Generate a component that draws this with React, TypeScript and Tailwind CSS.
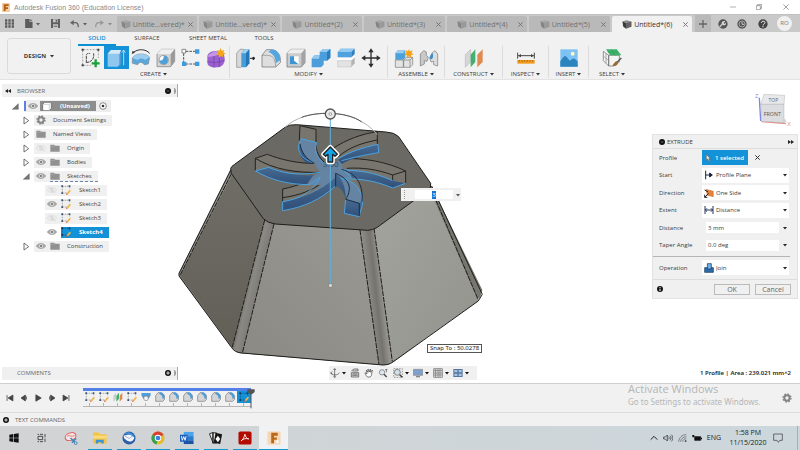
import React from 'react';
import clsx from 'clsx';

type IconProps = { className?: string };

/* ---------- small shared icons ---------- */

const Caret: React.FC<IconProps> = ({ className = 'w-1 h-1 fill-[#333]' }) => (
  <svg viewBox="0 0 8 8" className={className} aria-hidden="true">
    <path d="M0 2h8L4 7z" />
  </svg>
);

const CubeIcon: React.FC<{ active?: boolean }> = ({ active }) => (
  <svg viewBox="0 0 30 28" className="w-[10px] h-[9px] shrink-0" aria-hidden="true">
    <path d="M1 4 14 1l15 4-13 5z" fill={active ? '#8c8c8c' : '#a5a5a5'} />
    <path d="M1 4 12 9v18L3 20z" fill={active ? '#3a3a3a' : '#858585'} />
    <path d="M12 9 29 5v16l-17 6z" fill={active ? '#636363' : '#999'} />
  </svg>
);

const EyeIcon: React.FC<{ off?: boolean }> = ({ off }) => (
  <svg viewBox="0 0 30 24" className="w-[10px] h-2 shrink-0" aria-hidden="true">
    <path d="M1 12C7 2 23 2 29 12 23 22 7 22 1 12z" fill={off ? 'none' : '#a8a8a8'} stroke={off ? '#d6d6d6' : '#989898'} strokeWidth="2" />
    <circle cx="15" cy="12" r="5" fill={off ? '#e4e4e4' : '#858585'} stroke={off ? '#d6d6d6' : '#f2f2f2'} strokeWidth="2" />
    {off && <path d="M4 2 26 22" stroke="#d2d2d2" strokeWidth="2" />}
  </svg>
);

const FolderIcon = () => (
  <svg viewBox="0 0 30 24" className="w-[10px] h-2 shrink-0" aria-hidden="true">
    <path d="M1 2h11l3 3h14v18H1z" fill="#919191" />
    <path d="M1 7h13l3-3" stroke="#b5b5b5" strokeWidth="1.5" fill="none" />
  </svg>
);

const GearIcon: React.FC<IconProps> = ({ className = 'w-[10px] h-[10px] shrink-0' }) => (
  <svg viewBox="0 0 30 30" className={className} aria-hidden="true">
    <circle cx="15" cy="15" r="8" fill="none" stroke="#858585" strokeWidth="6" />
    <circle cx="15" cy="15" r="12" fill="none" stroke="#858585" strokeWidth="4" strokeDasharray="5 4.42" />
  </svg>
);

const SketchIcon: React.FC<{ dark?: boolean }> = ({ dark }) => (
  <svg viewBox="0 0 30 30" className="w-[10px] h-[10px] shrink-0" aria-hidden="true">
    <path d="M4 4h22M4 4v20h14M26 4v8" fill="none" stroke={dark ? '#17496b' : '#8b8b8b'} strokeWidth="2" strokeDasharray="5 2" />
    <g fill={dark ? '#123d66' : '#3c5574'}>
      <path d="M1 1h5v5H1zM23 1h5v5h-5zM1 22h5v5H1z" />
    </g>
    <path d="m17 25 9-11 4 3-9 11z" fill="#f3b63d" />
    <path d="m17 25 4 3-6 2z" fill="#e0532e" />
  </svg>
);

const InfoDot: React.FC<{ sign: 'plus' | 'minus' | 'info' }> = ({ sign }) => (
  <svg viewBox="0 0 18 18" className="w-[6px] h-[6px] shrink-0" aria-hidden="true">
    <circle cx="9" cy="9" r="9" fill="#111" />
    {sign === 'plus' && <path d="M9 4v10M4 9h10" stroke="#fff" strokeWidth="2.5" />}
    {sign === 'minus' && <path d="M5 9h8" stroke="#999" strokeWidth="2" />}
    {sign === 'info' && <path d="M9 3v3M9 8v7" stroke="#fff" strokeWidth="3" />}
  </svg>
);

/* ---------- ribbon icons, all on a 60 unit grid ---------- */

const Art: React.FC<{ children: React.ReactNode }> = ({ children }) => (
  <svg viewBox="0 0 60 60" className="w-5 h-5" aria-hidden="true">
    {children}
  </svg>
);

const CreateSketch = (
  <Art>
    <path d="M8 5h42M5 8v40M8 52h22M52 8v22" stroke="#777" strokeWidth="2" strokeDasharray="5 4" />
    <path d="M2 2h6v6H2zM49 2h6v6h-6zM2 49h6v6H2z" fill="#333" />
    <path d="M16 44V22c0-6 10-8 12-4M16 44c16-2 24-12 22-28" fill="none" stroke="#444" strokeWidth="3" strokeDasharray="9 2" />
    <path d="M44 34v24M32 46h24" stroke="#18a03c" strokeWidth="7" />
  </Art>
);
const Extrude = (
  <Art>
    <path d="M5 17 15 6h30l-4 12v32l-6 6H5z" fill="#8fc7ee" />
    <path d="M5 17 15 6h30l-4 11z" fill="#d3e9f8" />
    <path d="M41 18 46 7v40l-5 8z" fill="#4a98d2" />
    <path d="M53 52V10M48 14l5-8 5 8" stroke="#fff" strokeWidth="2" fill="none" />
  </Art>
);
const Revolve = (
  <Art>
    <path d="M4 30C14 14 44 14 56 28L52 48 40 50C32 40 24 42 20 50L4 46z" fill="#5ba7dc" stroke="#7c8b96" strokeWidth="2" />
    <path d="M4 30C14 14 44 14 56 28L42 36C32 28 24 32 20 36z" fill="#9bcdf0" />
    <path d="M6 14C20 2 44 2 56 16" stroke="#333" strokeWidth="3" fill="none" />
    <path d="m2 18 3-10 7 6z" fill="#333" />
  </Art>
);
const Hole = (
  <Art>
    <path d="M3 18 16 4h40v36L44 56H3z" fill="#d4d4d4" stroke="#777" strokeWidth="2" />
    <path d="M3 18 16 4h40L44 18z" fill="#f0f0f0" />
    <path d="M44 18 56 4v36L44 56z" fill="#9a9a9a" />
    <circle cx="23" cy="36" r="14" fill="#fff" stroke="#777" strokeWidth="2" />
    <path d="M23 23a13 13 0 1 1-13 14c10 2 14-6 13-14z" fill="#4f9fd8" />
  </Art>
);
const Pattern = (
  <Art>
    <path d="M14 10h30M14 48h30M8 16v26" stroke="#555" strokeWidth="3" strokeDasharray="8 3" />
    <path d="M3 4h11v11H3z" fill="#fff" stroke="#555" strokeWidth="2" />
    <path d="M42 4h13v13H42zM42 41h13v13H42zM3 41h13v13H3z" fill="#3f9be0" />
  </Art>
);
const Form = (
  <Art>
    <path d="M4 26c0-12 14-18 26-16l16 2c8 4 10 12 10 24 0 12-10 22-22 22-16 2-30-4-30-14z" fill="#9b62cf" />
    <path d="M4 26c6-12 20-16 36-14-2 8-8 10-14 12-8 0-16 4-22 2z" fill="#c394ea" />
    <path d="M24 24v34M4 40c12 4 34 6 52-4M40 14v42" stroke="#6f3aa3" strokeWidth="2" fill="none" />
    <path d="M44 0l3 8 8-2-3 7 7 4-8 3 1 8-7-4-6 5-1-8-8-1 6-6-4-7 8 1z" fill="#f5a51c" />
  </Art>
);
const PressPull = (
  <Art>
    <path d="M2 16 12 4h12v42L14 58H2z" fill="#d9d9d9" stroke="#888" strokeWidth="2" />
    <path d="M16 16 26 4h14v42L30 58H16z" fill="#469cdb" />
    <path d="M16 16 26 4h14L30 16z" fill="#9dd0f3" />
    <path d="M30 16 40 4v42L30 58z" fill="#2574b4" />
    <path d="M42 31h10M51 27l6 4-6 4z" stroke="#222" strokeWidth="3" fill="#222" />
  </Art>
);
const Fillet = (
  <Art>
    <path d="M3 22 16 5h14c16 0 28 12 28 30v9L44 57H3z" fill="#dedede" stroke="#666" strokeWidth="2" />
    <path d="M22 12 32 4c16 2 26 14 26 32L44 46C44 28 38 18 22 12z" fill="#54a6e0" />
    <path d="M3 22h14c18 0 26 8 27 35" fill="none" stroke="#888" strokeWidth="2" />
  </Art>
);
const Shell = (
  <Art>
    <path d="M3 16 14 4h43v40L46 57H3z" fill="#ccc" stroke="#666" strokeWidth="2" />
    <path d="M3 16 14 4h43L46 16z" fill="#eee" />
    <path d="M46 16 57 4v40L46 57z" fill="#a3a3a3" />
    <path d="M12 25h26v24H12z" fill="#fff" />
    <path d="M12 25v24h26L24 38V25z" fill="#3f94d2" />
  </Art>
);
const Combine = (
  <Art>
    <path d="M2 32 10 22h16V12L36 3h22v26L48 38H38v12l-8 8H2z" fill="#4b9edb" />
    <path d="M26 12 36 3h22L48 12zM2 32l8-10h16l-2 10z" fill="#95cbf1" />
    <path d="m48 12 10-9v26l-10 9z" fill="#2a7dbd" />
  </Art>
);
const SplitBody = (
  <Art>
    <path d="M5 12 14 2h42L46 12zM5 12h41v16H5z" fill="#4fa2de" />
    <path d="M5 12 14 2h42L46 12z" fill="#94caf0" />
    <path d="m46 12 10-10v16L46 28z" fill="#2d7fbe" />
    <path d="M2 33h46l9-8" stroke="#fff" strokeWidth="4" fill="none" />
    <path d="M5 38h41v19H5z" fill="#e3e3e3" stroke="#aaa" strokeWidth="1" />
    <path d="m46 38 10-10v18L46 57z" fill="#b4b4b4" />
  </Art>
);
const Move = (
  <Art>
    <path d="M30 8v44M8 30h44" stroke="#2e2e2e" strokeWidth="4" />
    <path d="m30 1 8 12H22zM30 59l8-12H22zM1 30l12-8v16zM59 30l-12-8v16z" fill="#2e2e2e" />
  </Art>
);
const Assemble = (
  <Art>
    <path d="M4 16 12 7h22v22l-8 6H4z" fill="#4ca0dc" />
    <path d="M4 16 12 7h22l-7 9z" fill="#9bcef2" />
    <path d="M4 36h24v22H4zM29 36 37 28h19v22l-8 8H29z" fill="#e4e4e4" stroke="#777" strokeWidth="2" />
    <path d="M29 36h19v22M48 36l8-8" stroke="#777" strokeWidth="2" fill="none" />
    <path d="m45 3 3 7 8-3-3 8 6 4-8 3 1 8-7-5-6 5-1-8-7-2 6-5-2-8 7 3z" fill="#f5a51c" />
  </Art>
);
const Joint = (
  <Art>
    <path d="M4 18 14 8l8 4v10l6 6-4 12-8-2v10L4 54z" fill="#c9c9c9" stroke="#777" strokeWidth="2" />
    <path d="M56 18 48 8l-10 8v8l-6 6 4 12 8-2v10l12 4z" fill="#ddd" stroke="#777" strokeWidth="2" />
    <path d="M32 30c0-6 4-12 10-14v12c-2 6-6 8-10 2z" fill="#3e8dc9" />
  </Art>
);
const Plane = (
  <Art>
    <path d="M4 20 20 4v38L4 58z" fill="#d6d6d6" stroke="#999" strokeWidth="1" />
    <path d="M20 20 34 4v38L20 58z" fill="#44b070" />
    <path d="M40 20 56 4v38L40 58z" fill="#e08a50" />
  </Art>
);
const Measure = (
  <Art>
    <path d="M5 14v18M55 14v18M7 23h46" stroke="#444" strokeWidth="3" />
    <path d="m6 23 9-5v10zM54 23l-9-5v10z" fill="#444" />
    <path d="M4 36h52v11H4z" fill="#f39b1d" />
    <path d="M10 36v5M18 36v5M26 36v5M34 36v5M42 36v5M50 36v5" stroke="#8d5200" strokeWidth="2" />
  </Art>
);
const Picture = (
  <Art>
    <path d="M4 4h52v52H4z" fill="#7cc2f5" />
    <path d="M4 40c6-10 12-18 16-16 6 4 8 12 13 14 6-6 10-8 14-6l9 8v16H4z" fill="#2c84bf" />
    <circle cx="41" cy="17" r="6" fill="#fdf6c3" />
  </Art>
);
const Select = (
  <Art>
    <path d="M4 10 20 22v32L4 38zM20 22h32v20L36 54H20z" fill="#f4f4f4" stroke="#666" strokeWidth="2" />
    <path d="M4 24 20 38M12 16v30" stroke="#888" strokeWidth="2" />
    <path d="M12 4h32l14 18H24z" fill="#3db46b" />
    <path d="M28 4l12 18M17 12h32" stroke="#2a8d50" strokeWidth="1" />
    <path d="M58 30 42 46" stroke="#555" strokeWidth="4" />
    <path d="M44 40c6 4 4 8 0 12-6 4-10 2-14 0 6-2 6-10 14-12z" fill="#9b6a34" />
  </Art>
);

/* ---------- ribbon data ---------- */

const ribbonGroups = [
  { label: 'CREATE', width: 'w-[152px]', icons: [CreateSketch, Extrude, Revolve, Hole, Pattern, Form] },
  { label: 'MODIFY', width: 'w-[158px]', icons: [PressPull, Fillet, Shell, Combine, SplitBody, Move] },
  { label: 'ASSEMBLE', width: 'w-[57px]', icons: [Assemble, Joint] },
  { label: 'CONSTRUCT', width: 'w-[58px]', icons: [Plane] },
  { label: 'INSPECT', width: 'w-[46px]', icons: [Measure] },
  { label: 'INSERT', width: 'w-[40px]', icons: [Picture] },
  { label: 'SELECT', width: 'w-[46px]', icons: [Select] },
];

const documents = [
  'Untitle...vered)*',
  'Untitle...vered)*',
  'Untitled*(2)',
  'Untitled*(3)',
  'Untitled*(4)',
  'Untitled*(5)',
  'Untitled*(6)',
];

interface TreeNode {
  label: string;
  level: 1 | 2;
  icon: 'gear' | 'folder' | 'sketch';
  eye?: 'on' | 'off';
  open?: boolean;
  active?: boolean;
}

const tree: TreeNode[] = [
  { label: 'Document Settings', level: 1, icon: 'gear' },
  { label: 'Named Views', level: 1, icon: 'folder' },
  { label: 'Origin', level: 1, icon: 'folder', eye: 'off' },
  { label: 'Bodies', level: 1, icon: 'folder', eye: 'on' },
  { label: 'Sketches', level: 1, icon: 'folder', eye: 'on', open: true },
  { label: 'Sketch1', level: 2, icon: 'sketch', eye: 'off' },
  { label: 'Sketch2', level: 2, icon: 'sketch', eye: 'on' },
  { label: 'Sketch3', level: 2, icon: 'sketch', eye: 'off' },
  { label: 'Sketch4', level: 2, icon: 'sketch', eye: 'on', active: true },
  { label: 'Construction', level: 1, icon: 'folder', eye: 'on' },
];

/* ---------- top of the window ---------- */

const TitleBar = () => (
  <header className="flex h-[14px] items-center bg-white pl-[2px] text-[#8a8a8a]">
    <svg viewBox="0 0 24 27" className="h-[9px] w-2" aria-hidden="true">
      <path d="M0 0h24v27H0z" fill="#f7cfa4" />
      <path d="M5 4h15v5H11v4h7v5h-7v6H5z" fill="#b35f14" />
    </svg>
    <h1 className="ml-1 flex-1 font-['Liberation_Sans',sans-serif] text-[7px] leading-[9px]">Autodesk Fusion 360 (Education License)</h1>
    <div className="flex items-center">
      <button aria-label="Minimize" className="flex w-[26px] justify-center">
        <svg viewBox="0 0 18 18" className="h-[6px] w-[6px]"><path d="M0 9h18" stroke="#888" strokeWidth="2" /></svg>
      </button>
      <button aria-label="Restore" className="flex w-[26px] justify-center">
        <svg viewBox="0 0 18 18" className="h-[6px] w-[6px]"><path d="M1 5h12v12H1zM5 5V1h12v12h-4" stroke="#777" strokeWidth="2" fill="none" /></svg>
      </button>
      <button aria-label="Close window" className="flex w-[28px] justify-center">
        <svg viewBox="0 0 18 18" className="h-[6px] w-[6px]"><path d="m1 1 16 16M17 1 1 17" stroke="#777" strokeWidth="2" /></svg>
      </button>
    </div>
  </header>
);

const TabBar = () => (
  <div className="flex h-[18px] border-t border-[#c0c0c0] bg-[#c9c9c9]">
    <div className="flex w-[117px] items-center pl-[5px] text-[#555]">
      <button aria-label="Data panel" className="w-5">
        <svg viewBox="0 0 27 27" className="h-[9px] w-[9px] fill-[#5c5c5c]">
          <path d="M0 1h7v7H0zM10 1h7v7h-7zM20 1h7v7h-7zM0 10h7v7H0zM10 10h7v7h-7zM20 10h7v7h-7zM0 19h7v7H0zM10 19h7v7h-7zM20 19h7v7h-7z" />
        </svg>
      </button>
      <button aria-label="File" className="flex w-[26px] items-center gap-[3px]">
        <svg viewBox="0 0 24 28" className="h-[9px] w-2 fill-[#5c5c5c]"><path d="M0 0h14v9h9v19H0zM16 0l7 7h-7z" /></svg>
        <Caret className="h-1 w-1 fill-[#5c5c5c]" />
      </button>
      <button aria-label="Save" className="w-[19px]">
        <svg viewBox="0 0 27 27" className="h-[9px] w-[9px]"><path d="M0 0h27v27H0z" fill="#606060" /><path d="M6 1h15v9H6zM6 16h15v11H6z" fill="#c9c9c9" /><path d="M14 2h5v6h-5zM8 20h11v3H8z" fill="#606060" /></svg>
      </button>
      <button aria-label="Undo" className="flex w-[25px] items-center gap-1">
        <svg viewBox="0 0 27 24" className="h-2 w-[9px]"><path d="M8 8h8c6 0 9 5 9 14" fill="none" stroke="#666" strokeWidth="4" /><path d="M0 8 11 0v16z" fill="#666" /></svg>
        <Caret className="h-1 w-1 fill-[#5c5c5c]" />
      </button>
      <button aria-label="Redo" className="flex items-center gap-1">
        <svg viewBox="0 0 27 24" className="h-2 w-[9px]"><path d="M19 8h-8c-6 0-9 5-9 14" fill="none" stroke="#999" strokeWidth="4" /><path d="M27 8 16 0v16z" fill="#999" /></svg>
        <Caret className="h-1 w-1 fill-[#8c8c8c]" />
      </button>
    </div>
    <nav className="flex flex-1 gap-[2px] pt-px" aria-label="Documents">
      {documents.map((name, i) => {
        const active = i === documents.length - 1;
        return (
          <div key={i} className={clsx('flex flex-1 items-center rounded-t-[2px] pr-1', active ? 'bg-[#f1f1f1] text-[#333]' : 'bg-[#b9b9b9] text-[#6f6f6f]')}>
            <button className="flex flex-1 items-center justify-center gap-[2px] text-[7px] leading-[9px] whitespace-nowrap">
              <CubeIcon active={active} />
              {name}
            </button>
            <button aria-label={`Close ${name}`}>
              <svg viewBox="0 0 15 15" className="h-[5px] w-[5px]"><path d="m1 1 13 13M14 1 1 14" stroke="#777" strokeWidth="3" /></svg>
            </button>
          </div>
        );
      })}
    </nav>
    <div className="flex w-[108px] items-center pl-[3px]">
      <button aria-label="New design" className="flex h-full w-4 items-center justify-center bg-[#b9b9b9]">
        <svg viewBox="0 0 24 24" className="h-2 w-2"><path d="M12 0v24M0 12h24" stroke="#666" strokeWidth="4" /></svg>
      </button>
      <button aria-label="Extensions" className="flex w-[23px] justify-center">
        <svg viewBox="0 0 30 30" className="h-[10px] w-[10px]"><circle cx="15" cy="15" r="14" fill="#555" /><path d="m5 24 8-9" stroke="#c9c9c9" strokeWidth="4" /><path d="M11 12c1-5 7-7 11-5l-5 5 2 3 5-4c1 6-5 10-10 7z" fill="#ddd" /></svg>
      </button>
      <button aria-label="Job status" className="flex w-4 justify-center">
        <svg viewBox="0 0 30 30" className="h-[10px] w-[10px]"><circle cx="15" cy="15" r="14" fill="#555" /><circle cx="15" cy="15" r="9" fill="none" stroke="#ccc" strokeWidth="2" /><path d="M15 9v7h6" stroke="#ddd" strokeWidth="2.5" fill="none" /></svg>
      </button>
      <button aria-label="Help" className="flex w-[25px] justify-center">
        <svg viewBox="0 0 30 30" className="h-[10px] w-[10px]"><circle cx="15" cy="15" r="14" fill="#444" /><path d="M10 12c0-7 11-7 11-1 0 4-6 4-6 8M15 21v4" stroke="#eee" strokeWidth="3" fill="none" /></svg>
      </button>
      <button className="ml-[2px] h-[15px] w-[15px] rounded-full bg-[#f0f0f0] text-[6px] leading-[15px] text-[#777]">RO</button>
    </div>
  </div>
);

const Ribbon = () => (
  <div className="flex h-12 border-b border-[#e3e3e3] bg-[#f1f1f1] pl-[7px] text-[6px] leading-[8px] text-[#3c3c3c]">
    <button className="mt-[6px] flex h-9 w-16 items-center justify-center gap-1 rounded-[3px] border border-[#dadada] font-bold">
      DESIGN <Caret />
    </button>
    <div className="ml-[7px] flex flex-1 flex-col">
      <nav className="flex h-[14px] items-stretch leading-[12px]" aria-label="Workspace tabs">
        <button className="w-[38px] border-b-2 border-[#0d8fd6] font-semibold text-[#0d8fd6]">SOLID</button>
        <button className="w-[62px] border-b-2 border-transparent">SURFACE</button>
        <button className="w-[60px] border-b-2 border-transparent">SHEET METAL</button>
        <button className="w-[52px] border-b-2 border-transparent">TOOLS</button>
      </nav>
      <div className="flex">
        {ribbonGroups.map((group, g) => (
          <section key={group.label} className={clsx('flex flex-col items-center', group.width, g < ribbonGroups.length - 1 && 'border-r border-[#dcdcdc]')}>
            <div className="flex">
              {group.icons.map((icon, i) => (
                <button
                  key={i}
                  aria-label={`${group.label} ${i + 1}`}
                  className={clsx('flex h-[23px] w-[25px] items-center justify-center', g === 0 && i === 1 && 'bg-[#1492d8]')}
                >
                  {icon}
                </button>
              ))}
            </div>
            <button className="mt-px flex items-center gap-[2px] whitespace-nowrap">
              {group.label} <Caret />
            </button>
          </section>
        ))}
      </div>
    </div>
  </div>
);

/* ---------- browser ---------- */

const PanelHeader: React.FC<{ title: string; sign: 'plus' | 'minus'; arrows?: boolean }> = ({ title, sign, arrows }) => (
  <div className="flex h-[13px] w-44 items-center border-r border-[#aaa] bg-[#f0f0f0] pl-[3px] text-[6px] leading-[8px] text-[#6a6a6a]">
    <span className="w-3">
      {arrows && <svg viewBox="0 0 18 12" className="h-1 w-[6px]"><path d="M9 0v12L0 6zM18 0v12L9 6z" fill="#222" /></svg>}
    </span>
    <h2 className="flex-1">{title}</h2>
    <button aria-label={`Toggle ${title}`} className="mr-[3px]"><InfoDot sign={sign} /></button>
    <svg viewBox="0 0 6 18" className="mr-px h-[6px] w-[2px]"><path d="M2 0v18M5 4v10" stroke="#666" strokeWidth="2" /></svg>
  </div>
);

const Twisty: React.FC<{ open?: boolean }> = ({ open }) => (
  <svg viewBox="0 0 21 27" className="h-[9px] w-[7px] shrink-0" aria-hidden="true">
    {open ? <path d="M19 5v17H1z" fill="#777" stroke="#333" strokeWidth="1" /> : <path d="M3 3v21l14-10z" fill="#fff" stroke="#555" strokeWidth="2.5" />}
  </svg>
);

const Browser = () => (
  <div className="text-[6px] leading-[8px] text-[#444]">
    <PanelHeader title="BROWSER" sign="minus" arrows />
    <ul className="pt-[2px]">
      <li className="flex h-[14px] items-center pl-[10px]">
        <Twisty open />
        <div className="ml-[5px] flex h-3 items-center bg-[#eee] pr-1">
          <span className="h-[10px] w-[2px] bg-[#5b7fe6]" />
          <span className="mx-[2px]"><EyeIcon /></span>
          <span className="flex h-[10px] items-center gap-2 bg-[#8d8d8d] pr-[6px] pl-[2px] font-bold text-white">
            <svg viewBox="0 0 30 27" className="h-[9px] w-[10px]"><path d="M2 7 8 1h20v18l-6 7H2z" fill="#fff" stroke="#555" strokeWidth="2" /><path d="M2 7h20v19M22 7l6-6" stroke="#bbb" fill="none" strokeWidth="2" /></svg>
            (Unsaved)
          </span>
          <svg viewBox="0 0 24 24" className="ml-[3px] h-2 w-2"><circle cx="12" cy="12" r="10" fill="#fff" stroke="#555" strokeWidth="2" /><circle cx="12" cy="12" r="4" fill="#333" /></svg>
        </div>
      </li>
      {tree.map((node) => (
        <li key={node.label} className={clsx('flex h-[14px] items-center', node.level === 1 ? 'pl-[21px]' : 'pl-[43px]')}>
          {node.level === 1 && <Twisty open={node.open} />}
          <div className={clsx('flex h-[11px] items-center pl-[2px]', node.level === 1 && 'ml-1', !node.active && 'bg-[#f0f0f0]')}>
            {node.eye && <span className="mr-1 flex"><EyeIcon off={node.eye === 'off'} /></span>}
            <span
              className={clsx(
                'flex h-[11px] items-center pr-[6px]',
                node.level === 1 ? 'gap-[7px]' : 'gap-2',
                node.active && 'bg-[#1492d8] pr-2 font-bold text-white',
                node.open && 'border-b border-dashed border-[#6d84a8]',
              )}
            >
              {node.icon === 'gear' && <GearIcon />}
              {node.icon === 'folder' && <FolderIcon />}
              {node.icon === 'sketch' && <SketchIcon dark={node.active} />}
              {node.label}
            </span>
          </div>
        </li>
      ))}
    </ul>
  </div>
);

/* ---------- 3D view ---------- */

const Model = () => (
  <svg viewBox="0 80 800 303" preserveAspectRatio="xMinYMin meet" className="absolute inset-0 h-full w-full" aria-hidden="true">
    <defs>
      <linearGradient id="front" x1="1" y1="0" x2="0" y2="1">
        <stop offset="0" stopColor="#9a9993" />
        <stop offset="1" stopColor="#8b8983" />
      </linearGradient>
      <linearGradient id="right" x1="0" y1="0" x2="1" y2="1">
        <stop offset="0" stopColor="#a3a49e" />
        <stop offset="1" stopColor="#93938d" />
      </linearGradient>
      <linearGradient id="left" x1="0" y1="0" x2="0" y2="1">
        <stop offset="0" stopColor="#6f6e66" />
        <stop offset="1" stopColor="#625f57" />
      </linearGradient>
      <linearGradient id="bevelL" gradientUnits="userSpaceOnUse" x1="222" y1="580" x2="264" y2="590">
        <stop offset="0" stopColor="#5f5d57" />
        <stop offset=".5" stopColor="#8b8983" />
        <stop offset="1" stopColor="#7f7d77" />
      </linearGradient>
      <linearGradient id="bevelR" gradientUnits="userSpaceOnUse" x1="595" y1="600" x2="640" y2="595">
        <stop offset="0" stopColor="#8d8b85" />
        <stop offset=".5" stopColor="#75736d" />
        <stop offset="1" stopColor="#9a9993" />
      </linearGradient>
      <linearGradient id="wall" x1="0" y1="0" x2="0" y2="1">
        <stop offset="0" stopColor="#466a92" />
        <stop offset="1" stopColor="#304f78" />
      </linearGradient>
    </defs>
    <g transform="translate(170 90) scale(.3333)">
      {/* body */}
      <path d="M182 240 27 550v8l158 215 20 16 420 35 26 1 20-10 260-193 6-22L785 288 600 415 290 390z" fill="#77766f" />
      <path d="M182 248 30 556 187 772 284 388z" fill="url(#left)" />
      <path d="M284 388 187 772q8 18 30 18L312 402z" fill="url(#bevelL)" />
      <path d="M312 402 217 790l410 34L570 420z" fill="url(#front)" />
      <path d="M570 420 627 824q28 6 40-10L610 412z" fill="url(#bevelR)" />
      <path d="M610 412 667 815 925 633 780 300z" fill="url(#right)" />
      <path d="M180 248 27 550v8l4-2L186 256z" fill="#8b8a83" />
      <g fill="none" stroke="#1d1d1b" strokeWidth="3">
        <path d="M182 240 27 550v8l158 215q8 14 30 16l410 35q30 4 44-8l256-183 12-20L785 288" />
        <path d="M284 390 187 772M312 402 217 790M570 420l57 404M612 414l55 400M783 296 925 630M184 252 30 556" strokeDasharray="16 3" />
      </g>
      <path d="M182 235q2-6 12-12L345 112q12-9 35-8l268 22q25 1 38 14l96 140q4 12-10 22L622 412q-14 9-30 9L316 402q-24-3-36-16L184 250z" fill="#6b6963" stroke="#1d1d1b" strokeWidth="3" />

      {/* grey upper faces of the blades */}
      <g fill="#77756d">
        <path d="M390 107 438 118V158C432 185 450 212 478 230L445 240 432 218C400 195 386 165 388 150z" />
        <path d="M488 176C530 148 575 132 622 125V163C580 170 540 185 500 212z" />
        <path d="M510 205C580 203 650 215 707 243V280L668 293V270C620 250 570 240 515 240z" />
        <path d="M256 205 292 193C330 208 385 222 432 220L450 247 296 234 256 243z" />
        <path d="M338 297C385 288 425 270 450 248L485 255C455 300 400 325 338 335z" />
        <path d="M515 238C555 250 578 290 576 335L527 328 500 250z" />
      </g>
      <g fill="none" stroke="#24231f" strokeWidth="3" strokeLinejoin="round">
        <path d="M388 152 390 107 438 118V158C438 185 446 200 462 216" />
        <path d="M488 176C530 148 575 132 622 125V163M622 150C580 158 540 170 505 200" />
        <path d="M515 206C580 203 650 215 707 243V280M707 243 668 255V293M668 255C620 238 580 232 530 235" />
        <path d="M256 243V205L292 193C330 208 385 222 440 220M256 205C310 238 380 250 450 247" />
        <path d="M338 335V297C385 288 425 270 450 248M338 323C390 316 430 300 460 275" />
      </g>

      {/* selected profile seen through the blades */}
      <path
        d="M395 146 440 158C430 188 445 212 472 224 492 215 500 212 515 212L518 236C540 238 560 240 585 246L545 264 515 266C560 270 577 300 577 342L527 328C527 300 515 288 497 288 470 310 430 320 385 328 420 310 435 300 455 285L420 284C400 270 420 262 450 247L432 219C395 205 376 170 395 146z"
        fill="#6485a7"
        fillOpacity=".93"
      />
      <g fill="url(#wall)">
        <path d="M390 160C392 185 408 207 432 219L412 220C390 205 382 180 390 160z" />
        <path d="M624 163 626 188C580 195 545 205 515 222L505 208C540 185 580 172 624 163z" />
        <path d="M540 242C590 246 632 256 668 272L707 280 668 294C625 276 585 266 545 264z" />
        <path d="M256 243 296 232C340 250 390 258 430 256L410 284C350 284 300 268 256 243z" />
        <path d="M338 335C400 325 450 305 497 262V290C450 330 400 352 338 362z" />
        <path d="M497 250C515 262 528 290 527 328 522 305 512 292 497 288z" />
        <path d="M527 328 568 340 567 380 523 370zM568 340 577 330 574 352 567 380z" />
      </g>
      <g fill="none" stroke="#4ba3df" strokeWidth="3" strokeLinejoin="round">
        <path d="M432 219C385 205 376 170 395 146L440 158C430 188 445 212 472 224" />
        <path d="M515 212C540 205 580 195 626 188L624 163C580 172 540 185 505 206" />
        <path d="M515 240C590 240 632 256 668 272M515 266C585 266 625 276 668 294L707 280" />
        <path d="M450 247C380 258 340 250 296 232L256 243C300 268 350 284 420 284L450 262" />
        <path d="M497 288C450 330 400 352 338 362V335C400 325 430 300 450 262" />
        <path d="M515 266C560 272 580 310 577 345L567 380 523 370 527 328M515 236 545 264" />
      </g>
      <path d="M497 250V290M497 250C545 270 545 300 527 328L568 340V378M515 238C565 252 580 290 576 335M390 162C394 188 410 208 432 219" fill="none" stroke="#1b2c42" strokeWidth="3" />
      <text x="482" y="231" textAnchor="middle" fontSize="24" fill="#263646" fillOpacity=".8">3.00</text>

      {/* extrude manipulator */}
      <path d="M345 112C400 58 550 45 622 134" fill="none" stroke="#b0b0b0" strokeWidth="3" />
      <path d="M395 82C435 66 530 62 575 96" fill="none" stroke="#555" strokeWidth="3" />
      <path d="M481 84V580" stroke="#5cb2dc" strokeWidth="3" />
      <circle cx="481" cy="72" r="15" fill="#e9e9e9" stroke="#555" strokeWidth="4" />
      <circle cx="481" cy="72" r="4" fill="#fff" stroke="#777" strokeWidth="2" />
      <path d="M481 171 502 193 495 199 488 193V216H474V193L467 199 460 193z" fill="#fff" stroke="#fff" strokeWidth="13" strokeLinejoin="round" />
      <path d="M481 171 502 193 495 199 488 193V216H474V193L467 199 460 193z" fill="#14a4ea" stroke="#222" strokeWidth="4" strokeLinejoin="round" />
      <path d="M477 582h9v9h-9z" fill="#d9e0e2" stroke="#777" />
    </g>
  </svg>
);

const ViewCube = () => (
  <svg viewBox="0 0 120 114" className="mr-1 h-[38px] w-10" role="img" aria-label="View cube">
    <path d="M26 94 92 100 98 92 94 84z" fill="#ddd" />
    <path d="M16 20 20 90" stroke="#7c84f0" strokeWidth="4" />
    <path d="M22 92 96 98" stroke="#f08a8a" strokeWidth="3" />
    <path d="M30 10 92 13 90 40 20 40z" fill="#e9e9eb" stroke="#999" strokeWidth="1" />
    <path d="M20 40H90V95L22 91z" fill="#dcdde0" stroke="#999" strokeWidth="1" />
    <text x="58" y="32" textAnchor="middle" fontSize="15" fill="#666">TOP</text>
    <text x="55" y="74" textAnchor="middle" fontSize="16" fill="#555">FRONT</text>
    <text x="3" y="22" fontSize="18" fill="#7c84f0">Z</text>
    <text x="100" y="104" fontSize="18" fill="#f08a8a">X</text>
  </svg>
);

/* ---------- extrude dialog ---------- */

const startIcon = <path d="M5 2v26M5 15h18M17 9l8 6-8 6z" stroke="#1d2440" strokeWidth="3" fill="#1d2440" />;
const directionIcon = (
  <>
    <path d="M6 4 28 10v16L10 22z" fill="#e8833a" stroke="#93420f" strokeWidth="1" />
    <path d="m2 28 12-12M2 20v8h8M2 6l10 6" stroke="#222" strokeWidth="3" fill="none" />
  </>
);
const extentIcon = <path d="M3 3v24M27 3v24M4 15h22M9 10l-5 5 5 5M21 10l5 5-5 5" stroke="#26345c" strokeWidth="3" fill="none" />;
const joinIcon = (
  <>
    <path d="M2 14h26v14H2z" fill="#2d6fae" stroke="#0f2f55" strokeWidth="2" />
    <path d="M10 2h12v16H10z" fill="#6fb1e6" stroke="#0f2f55" strokeWidth="2" />
  </>
);

const SelectField: React.FC<{ id: string; value: string; icon: React.ReactNode }> = ({ id, value, icon }) => (
  <div className="flex h-[15px] min-w-0 flex-1 items-center bg-white px-[2px]">
    <svg viewBox="0 0 30 30" className="h-[10px] w-[10px] shrink-0" aria-hidden="true">{icon}</svg>
    <select id={id} defaultValue={value} className="ml-[2px] min-w-0 flex-1 appearance-none bg-transparent outline-none">
      <option>{value}</option>
    </select>
    <Caret className="h-1 w-1 fill-[#222]" />
  </div>
);

const TextField: React.FC<{ id: string; value: string }> = ({ id, value }) => (
  <div className="flex min-w-0 flex-1 items-center pr-[2px] pl-1">
    <input id={id} defaultValue={value} className="h-[11px] min-w-0 flex-1 bg-white px-[2px] outline-none" />
    <Caret className="ml-1 h-1 w-1 fill-[#222]" />
  </div>
);

const FieldRow: React.FC<{ id: string; label: string; children: React.ReactNode }> = ({ id, label, children }) => (
  <div className="flex items-center pr-[8px] pl-[6px]">
    <label htmlFor={id} className="w-[43px]">{label}</label>
    {children}
  </div>
);

const ExtrudeDialog = () => (
  <form className="w-[146px] border border-[#e2e2e2] bg-[#f0f0f0] text-[6px] leading-[8px] text-[#3a3a3a]" onSubmit={(e) => e.preventDefault()}>
    <div className="flex h-[14px] items-center gap-[2px] border-b border-[#ddd] pr-[3px] pl-[6px]">
      <InfoDot sign="minus" />
      <h2 className="flex-1">EXTRUDE</h2>
      <svg viewBox="0 0 18 12" className="h-1 w-[6px]"><path d="M0 0v12l9-6zM9 0v12l9-6z" fill="#222" /></svg>
    </div>
    <div className="grid h-[105px] auto-rows-fr grid-cols-1">
      <FieldRow id="profile" label="Profile">
        <button id="profile" type="button" className="flex h-[15px] w-[46px] items-center justify-center gap-1 bg-[#1492d8] font-semibold text-white">
          <svg viewBox="0 0 18 27" className="h-2 w-[5px]"><path d="M1 1v20l5-4 4 9 4-2-4-8h7z" fill="#e8e8e8" stroke="#555" strokeWidth="2" /></svg>
          1 selected
        </button>
        <button type="button" aria-label="Clear selection" className="ml-[7px]">
          <svg viewBox="0 0 15 15" className="h-[5px] w-[5px]"><path d="m1 1 13 13M14 1 1 14" stroke="#333" strokeWidth="3" /></svg>
        </button>
      </FieldRow>
      <FieldRow id="start" label="Start"><SelectField id="start" value="Profile Plane" icon={startIcon} /></FieldRow>
      <FieldRow id="direction" label="Direction"><SelectField id="direction" value="One Side" icon={directionIcon} /></FieldRow>
      <FieldRow id="extent" label="Extent"><SelectField id="extent" value="Distance" icon={extentIcon} /></FieldRow>
      <FieldRow id="distance" label="Distance"><TextField id="distance" value="3 mm" /></FieldRow>
      <FieldRow id="taper" label="Taper Angle"><TextField id="taper" value="0.0 deg" /></FieldRow>
    </div>
    <hr className="mt-[2px] mr-[7px] mb-[3px] border-[#b5b5b5]" />
    <FieldRow id="operation" label="Operation"><SelectField id="operation" value="Join" icon={joinIcon} /></FieldRow>
    <div className="mt-1 flex h-[19px] items-center border-t border-[#ddd] pr-[6px] pl-1">
      <InfoDot sign="info" />
      <button className="ml-auto h-[11px] w-9 border border-[#bbb] text-[7px] leading-[9px] text-[#666]">OK</button>
      <button type="button" className="ml-[5px] h-[11px] w-9 border border-[#bbb] text-[7px] leading-[9px] text-[#666]">Cancel</button>
    </div>
  </form>
);

/* ---------- navigation bar under the model ---------- */

const navTools = [
  { name: 'Orbit', caret: true, art: <path d="M14 2v26M2 15c4 8 22 8 26-1M7 10l-5 5 6 3M10 6l4-4 4 4M10 25l4 4 4-4" fill="none" stroke="#444" strokeWidth="2" /> },
  { name: 'Look at', art: <path d="M4 14h22v13H4zM8 9h16M4 9l8-6h12v6M7 18h16M7 22h16" fill="#ddd" stroke="#444" strokeWidth="2" /> },
  { name: 'Pan', art: <path d="M10 27C6 22 3 18 3 14l6 4-2-12 5 7V3l4 9 3-9 1 10 5-7-2 12c0 6-3 6-4 9z" fill="#fff" stroke="#444" strokeWidth="2" /> },
  { name: 'Zoom', art: <><circle cx="12" cy="13" r="8" fill="#dfe8ee" stroke="#666" strokeWidth="2" /><path d="m18 19 8 8" stroke="#444" strokeWidth="4" /><path d="M25 3v10M22 6l3-3 3 3" stroke="#444" strokeWidth="2" fill="none" /></> },
  { name: 'Fit', caret: true, art: <><path d="M2 2h26v26H2z" fill="none" stroke="#777" strokeWidth="2" strokeDasharray="5 3" /><circle cx="13" cy="13" r="9" fill="#cfe0e6" stroke="#555" strokeWidth="2" /><path d="m20 20 8 8" stroke="#333" strokeWidth="4" /></> },
  { name: 'Display settings', caret: true, art: <><path d="M1 4h28v18H1z" fill="#7f9fcc" stroke="#888" strokeWidth="2" /><path d="M9 26h12" stroke="#888" strokeWidth="4" /></> },
  { name: 'Grid', caret: true, art: <path d="M2 2h26v26H2zM2 8h26M2 15h26M2 21h26M8 2v26M15 2v26M21 2v26" fill="#eee" stroke="#666" strokeWidth="2" /> },
  { name: 'Viewports', caret: true, art: <><path d="M1 3h28v24H1z" fill="#56779f" /><path d="M4 6h9v7H4zM17 6h9v7h-9zM4 17h9v7H4zM17 17h9v7h-9z" fill="#a9c3e6" /></> },
];

const NavBar = () => (
  <div className="mr-[72px] flex h-[14px] w-[148px] items-center justify-between bg-[#f0f0f0] pr-2 pl-px">
    {navTools.map((tool) => (
      <button key={tool.name} aria-label={tool.name} className="flex items-center gap-[2px]">
        <svg viewBox="0 0 30 30" className="h-[10px] w-[10px]">{tool.art}</svg>
        {tool.caret && <Caret className="h-1 w-1 fill-[#111]" />}
      </button>
    ))}
  </div>
);

/* ---------- timeline ---------- */

const ExtrudeFeature = () => (
  <svg viewBox="0 0 30 30" className="h-[10px] w-[10px]" aria-hidden="true">
    <path d="M2 3h26v8l-5 9H7l-5-9z" fill="#5b93bd" />
    <path d="M2 3h26v8H2z" fill="#4ca0dc" />
    <circle cx="15" cy="19" r="7" fill="#eef4f8" stroke="#888" strokeWidth="2" />
  </svg>
);
const PlaneFeature = () => (
  <svg viewBox="0 0 30 30" className="h-[10px] w-[10px]" aria-hidden="true">
    <path d="M1 11 9 2v18l-8 9z" fill="#ccc" /><path d="M10 11l8-9v18l-8 9z" fill="#44b070" /><path d="M20 11l8-9v18l-8 9z" fill="#e08a50" />
  </svg>
);
const FilletFeature = () => (
  <svg viewBox="0 0 30 30" className="h-[10px] w-[10px]" aria-hidden="true">
    <path d="M2 11 9 2h6c9 0 14 7 14 14v6l-6 6H2z" fill="#d5d5d5" stroke="#777" strokeWidth="2" />
    <path d="M12 5l5-4c8 2 12 8 12 16l-6 5C23 13 20 8 12 5z" fill="#4c9dd8" />
  </svg>
);

const features = ['sketch', 'sketch', 'plane', 'sketch', 'extrude', 'fillet', 'fillet', 'fillet', 'fillet', 'fillet', 'fillet', 'current'];

const playback = [
  { name: 'Go to start', d: 'M4 4v22M26 4v22L8 15z' },
  { name: 'Step back', d: 'M20 4v22L4 15zM24 9v12' },
  { name: 'Play', d: 'M7 3v24l20-12z' },
  { name: 'Step forward', d: 'M10 4v22l16-11zM6 9v12' },
  { name: 'Go to end', d: 'M26 4v22M4 4v22l18-11z' },
];

const Timeline = () => (
  <div className="relative flex h-[29px] items-center border-t border-[#cfcfcf] bg-[#f1f1f1]">
    <div className="flex w-[83px] pl-[3px]">
      {playback.map((p) => (
        <button key={p.name} aria-label={p.name} className="flex h-4 w-[14px] items-center justify-center">
          <svg viewBox="0 0 30 30" className="h-2 w-2"><path d={p.d} fill="#444" stroke="#444" strokeWidth="3" /></svg>
        </button>
      ))}
    </div>
    <div className="flex h-5 items-start">
      <ol className="flex border-t-[3px] border-[#5381e8]">
        {features.map((f, i) => (
          <li key={i} className="flex w-[14px] flex-col items-center">
            <span className={clsx('flex h-3 w-[14px] items-center justify-center', f === 'current' && 'bg-[#1492d8]')}>
              {f === 'sketch' && <SketchIcon />}
              {f === 'current' && <SketchIcon dark />}
              {f === 'plane' && <PlaneFeature />}
              {f === 'extrude' && <ExtrudeFeature />}
              {f === 'fillet' && <FilletFeature />}
            </span>
            <span className="flex h-1 w-full border-b border-[#b5b5b5]">
              <i className="ml-[6px] h-full w-px bg-[#b5b5b5]" />
            </span>
          </li>
        ))}
      </ol>
      <svg viewBox="0 0 24 60" className="-ml-1 mt-px h-5 w-2" aria-hidden="true">
        <path d="M1 1h22v8l-8 7H9L1 9z" fill="#555" />
        <path d="M12 14v44" stroke="#555" strokeWidth="3" />
      </svg>
    </div>
    <button aria-label="Timeline settings" className="mr-2 ml-auto"><GearIcon /></button>
    {/* Windows activation watermark */}
    <div className="pointer-events-none absolute top-0 right-[34px] w-[138px] whitespace-nowrap text-[#b6b6b6]">
      <p className="text-[11px] leading-[10px]">Activate Windows</p>
      <p className="mt-[3px] font-['Noto_Sans',sans-serif] text-[8px] leading-[9px]">Go to Settings to activate Windows.</p>
    </div>
  </div>
);

/* ---------- Windows taskbar ---------- */

const taskIcons = [
  { name: 'Start', art: <path d="M1 5 13 3v11H1zM15 3l14-2v13H15zM1 16h12v11L1 25zM15 16h14v13l-14-2z" fill="#111" /> },
  { name: 'Task view', art: <path d="M2 4h4M2 26h4M9 4h9M9 26h9M3 10h14v10H3zM24 3v10M24 17v10" fill="none" stroke="#333" strokeWidth="2.5" /> },
  { name: 'Snipping tool', art: <><ellipse cx="14" cy="12" rx="12" ry="8" fill="#f6e6e6" stroke="#dc5151" strokeWidth="2" transform="rotate(-20 14 12)" /><path d="M6 12c6-6 12 4 18-4" stroke="#e07a7a" strokeWidth="2" fill="none" /><path d="m14 15 9 9M26 16 17 25" stroke="#3d87b8" strokeWidth="3" /><circle cx="25" cy="26" r="3" fill="none" stroke="#3d87b8" strokeWidth="2" /></> },
  { name: 'File Explorer', open: true, art: <><path d="M0 3h12l3 4h14v20H0z" fill="#f5c445" /><path d="M0 10h29v6H0z" fill="#fbdc7c" /><path d="M6 27v-8h17v8h-5v-3h-7v3z" fill="#3e92d6" /></> },
  { name: 'Thunderbird', open: true, art: <><circle cx="15" cy="15" r="14" fill="#2a5fa8" /><path d="M3 10 17 7l9 6c1 8-8 12-15 8L5 16z" fill="#f4f6fa" /><path d="m5 10 10 6 9-6" stroke="#9db3cf" strokeWidth="2" fill="none" /><path d="M3 8c8-10 22-6 25 8-6-9-16-10-25-8z" fill="#3c8fd8" /></> },
  { name: 'Chrome', open: true, art: <><circle cx="15" cy="15" r="14" fill="#e8b92c" /><path d="M15 15 3 8a14 14 0 0 1 24 0z" fill="#d9412f" /><path d="M3 8l12 7-3 14A14 14 0 0 1 3 8z" fill="#36a04f" /><circle cx="15" cy="15" r="7" fill="#fff" /><circle cx="15" cy="15" r="5" fill="#3f7fe0" /></> },
  { name: 'Word', open: true, art: <><path d="M8 2h21v9H8z" fill="#4aa3ea" /><path d="M8 11h21v9H8z" fill="#2a7bd0" /><path d="M8 20h21v8H8z" fill="#1b55a5" /><path d="M0 8h16v15H0z" fill="#1a5dbe" /><path d="m3 11 2 9 3-8 3 8 2-9" stroke="#fff" strokeWidth="2" fill="none" /></> },
  { name: 'Solitaire', open: true, art: <><path d="M1 6 9 3v23zM8 4h8v22H8z" fill="#eee" stroke="#222" strokeWidth="2" /><path d="m14 4 14 3-4 21-14-3z" fill="#151515" /><path d="m19 10 5 7-5 7-5-7z" fill="#fff" /></> },
  { name: 'Acrobat', open: true, art: <><rect x="1" y="1" width="28" height="28" rx="4" fill="#b30b00" /><path d="M15 7c-2 6-4 12-8 14 2-4 10-6 16-4-4 0-8-6-8-10z" fill="none" stroke="#fff" strokeWidth="2" /></> },
  { name: 'Fusion 360', open: true, focus: true, art: <><path d="M1 1h28v28H1z" fill="#f8d4b0" /><path d="M9 4h14v6h-8v4h6v5h-6v7H9z" fill="#b8691c" /><path d="M20 20h5v6h-5z" fill="#fff" /></> },
];

const Taskbar = () => (
  <footer className="flex h-6 items-center bg-linear-to-r from-[#d2d3d4] to-[#ccd7dc] text-[#222]">
    {taskIcons.map((t, i) => (
      <button
        key={t.name}
        aria-label={t.name}
        className={clsx('flex h-full items-center justify-center', i === 0 ? 'w-[27px]' : 'w-[29px]', t.focus && 'bg-[#eff1f2]')}
      >
        <span className={clsx('flex h-full items-center justify-center border-b', t.focus ? 'w-full' : 'w-6', t.open ? 'border-[#0f9bd0]' : 'border-transparent')}>
          <svg viewBox="0 0 30 30" className={i < 2 ? 'h-[10px] w-[10px]' : 'h-[14px] w-[14px]'}>{t.art}</svg>
        </span>
      </button>
    ))}
    <div className="ml-auto flex h-full items-center gap-[5px] text-[7px] leading-[10px]">
      <div className="flex items-center gap-[5px] pr-[2px]">
        <svg viewBox="0 0 24 24" className="h-2 w-2"><path d="m2 17 10-10 10 10" stroke="#222" strokeWidth="3" fill="none" /></svg>
        <svg viewBox="0 0 30 24" className="h-2 w-[10px]"><path d="M2 9h5l6-6v18l-6-6H2zM17 8c2 2 2 6 0 8M21 5c4 4 4 10 0 14M25 2c6 6 6 14 0 20" stroke="#222" strokeWidth="2" fill="none" /></svg>
        <svg viewBox="0 0 27 24" className="h-2 w-[9px]"><path d="M2 23C3 11 12 2 25 2M8 23c0-8 8-15 17-15M14 23c0-5 5-9 11-9" stroke="#555" strokeWidth="2" fill="none" /><path d="M20 23c0-3 2-4 5-4v4z" fill="#222" /></svg>
        <svg viewBox="0 0 30 24" className="h-2 w-[10px]"><path d="M8 8h18v11H8z" fill="#111" stroke="#111" strokeWidth="2" /><path d="M26 11h4v5h-4zM1 3h6v7H1z" fill="#111" /></svg>
        <span>ENG</span>
      </div>
      <div className="w-10 text-center">
        <time className="block">1:58 PM</time>
        <time className="block">11/15/2020</time>
      </div>
      <button aria-label="Notifications" className="mr-[9px]">
        <svg viewBox="0 0 30 30" className="h-[10px] w-[10px]"><path d="M2 3h26v19h-8l-4 6-4-6H2z" fill="none" stroke="#333" strokeWidth="2" /></svg>
      </button>
      <span className="mr-[2px] h-full w-px bg-[#a9b0b3]" />
    </div>
  </footer>
);

const App: React.FC = () => {
  return (
    <div className="flex min-h-screen flex-col bg-white font-['Open_Sans','Noto_Sans',sans-serif]">
      <TitleBar />
      <TabBar />
      <Ribbon />
      <main className="relative flex flex-1 flex-col justify-between">
        <Model />
        <div className="relative flex justify-between">
          <div className="pt-1 pl-[2px]">
            <Browser />
          </div>
          <div className="flex flex-col items-end gap-[5px] pt-[11px] pr-[2px]">
            <ViewCube />
            <ExtrudeDialog />
          </div>
        </div>

        {/* value entry next to the manipulator */}
        <div className="absolute top-[108px] left-[401px] flex h-[13px] w-[60px] items-center bg-[#f0f0f0]">
          <span className="ml-[3px] h-[9px] border-l border-dotted border-[#999]" />
          <div className="ml-[10px] flex h-[9px] w-[38px] items-center justify-center bg-white">
            <input aria-label="Extrude distance" defaultValue="3" className="h-2 w-1 bg-[#1273d8] text-center text-[6px] leading-[8px] text-white outline-none" />
          </div>
          <Caret className="ml-[3px] h-1 w-1 fill-[#555]" />
        </div>
        <div className="absolute top-[264px] left-[427px] h-[9px] border border-[#555] bg-white px-[2px] font-['Noto_Sans',sans-serif] text-[6px] leading-[7px] whitespace-nowrap text-[#222]">
          Snap To : 50.0278
        </div>

        <div className="relative flex items-center justify-between pr-[9px] pb-[3px] pl-[2px]">
          <PanelHeader title="COMMENTS" sign="plus" />
          <NavBar />
          <p className="font-['Noto_Sans',sans-serif] text-[6px] leading-[8px] font-semibold text-[#222]">1 Profile | Area : 239.021 mm^2</p>
        </div>
      </main>
      <Timeline />
      <div className="flex h-[14px] items-center gap-[6px] border-t border-[#dcdcdc] bg-[#f1f1f1] pl-[3px] text-[6px] leading-[8px] text-[#666]">
        <InfoDot sign="plus" />
        TEXT COMMANDS
      </div>
      <Taskbar />
    </div>
  );
};

export default App;
